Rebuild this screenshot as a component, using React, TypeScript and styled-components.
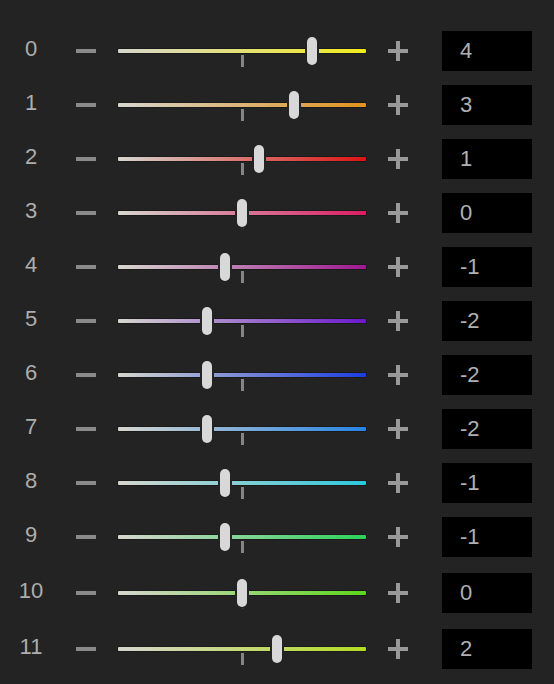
import React, { useState } from 'react'
import styled, { createGlobalStyle } from 'styled-components'

const GlobalStyle = createGlobalStyle`
  html, body {
    margin: 0;
    padding: 0;
    background: #232323;
  }
  body {
    font-family: 'Liberation Sans', Arial, sans-serif;
  }
`

const Panel = styled.div`
  width: 554px;
  height: 684px;
  box-sizing: border-box;
  padding-top: 24px;
  background: #232323;
  display: flex;
  flex-direction: column;
  overflow: hidden;
`

const Row = styled.div<{ $shift: boolean }>`
  display: flex;
  align-items: center;
  height: 54px;
  margin-top: ${p => (p.$shift ? '2px' : '0')};
`

const Label = styled.div`
  width: 62px;
  text-align: center;
  font-size: 22px;
  color: #adadad;
  line-height: 40px;
  margin-top: -4px;
`

const Minus = styled.button`
  margin-left: 14px;
  width: 20px;
  height: 20px;
  padding: 0;
  border: 0;
  background: transparent;
  display: flex;
  align-items: center;
  cursor: pointer;
  &::before {
    content: '';
    display: block;
    width: 20px;
    height: 4px;
    background: #8a8a8a;
  }
`

const Plus = styled.button`
  position: relative;
  margin-left: 22px;
  width: 20px;
  height: 20px;
  padding: 0;
  border: 0;
  background: transparent;
  cursor: pointer;
  &::before,
  &::after {
    content: '';
    position: absolute;
    background: #999;
  }
  &::before {
    left: 0;
    top: 8px;
    width: 20px;
    height: 4px;
  }
  &::after {
    left: 8px;
    top: 0;
    width: 4px;
    height: 20px;
  }
`

const SliderBox = styled.div`
  position: relative;
  margin-left: 22px;
  width: 248px;
  height: 40px;
  display: flex;
  align-items: center;
`

const Track = styled.div<{ $color: string }>`
  width: 100%;
  height: 4px;
  border-radius: 1px;
  background: linear-gradient(to right, #d6d6ce 0%, ${p => p.$color} 100%);
  box-shadow: 0 0 0 1px rgba(0, 0, 0, 0.25);
`

const Tick = styled.div`
  position: absolute;
  left: 123px;
  top: 24px;
  width: 3px;
  height: 12px;
  background: #858585;
`

const Thumb = styled.div`
  position: absolute;
  top: 6px;
  width: 10px;
  height: 28px;
  box-sizing: border-box;
  border-radius: 5px;
  background: #d8d8d8;
  box-shadow: 0 0 0 2px #232323;
`

const ValueBox = styled.div`
  margin-left: 34px;
  width: 90px;
  height: 40px;
  box-sizing: border-box;
  padding-left: 18px;
  background: #000;
  color: #b0b0b0;
  font-size: 22px;
  line-height: 40px;
`

const colors = [
  '#f2ec1c',
  '#e2921e',
  '#dc1414',
  '#dc1c62',
  '#a01890',
  '#6a18cc',
  '#1c3ce0',
  '#2684e4',
  '#2cc8dc',
  '#2cd25a',
  '#5cd61c',
  '#b4dc22'
]

const initial = [4, 3, 1, 0, -1, -2, -2, -2, -1, -1, 0, 2]

// 一个刻度约 17.4px，0 在轨道中间
const STEP = 17.4

const App: React.FC = () => {
  const [values, setValues] = useState(initial)
  const change = (i: number, d: number) =>
    setValues(v => v.map((x, j) => (j === i ? Math.max(-7, Math.min(7, x + d)) : x)))

  return (
    <Panel>
      <GlobalStyle />
      {values.map((v, i) => (
        <Row key={i} $shift={i >= 10}>
          <Label>{i}</Label>
          <Minus onClick={() => change(i, -1)} aria-label="minus" />
          <SliderBox>
            <Track $color={colors[i]} />
            <Tick />
            <Thumb style={{ left: 124 + v * STEP - 5 + 'px' }} />
          </SliderBox>
          <Plus onClick={() => change(i, 1)} aria-label="plus" />
          <ValueBox>{v}</ValueBox>
        </Row>
      ))}
    </Panel>
  )
}

export default App
